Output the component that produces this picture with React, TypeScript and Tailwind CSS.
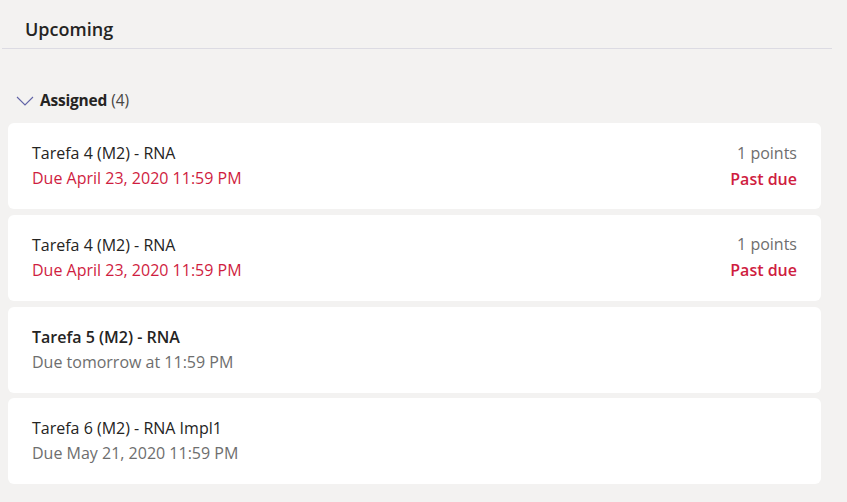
import React from 'react'

type Assignment = {
  title: string
  due: string
  points?: string
  pastDue?: boolean
  bold?: boolean
}

const items: Assignment[] = [
  { title: 'Tarefa 4 (M2) - RNA', due: 'Due April 23, 2020 11:59 PM', points: '1 points', pastDue: true },
  { title: 'Tarefa 4 (M2) - RNA', due: 'Due April 23, 2020 11:59 PM', points: '1 points', pastDue: true },
  { title: 'Tarefa 5 (M2) - RNA', due: 'Due tomorrow at 11:59 PM', bold: true },
  { title: 'Tarefa 6 (M2) - RNA Impl1', due: 'Due May 21, 2020 11:59 PM' },
]

export default function App() {
  return (
    <div className="min-h-[502px] w-[847px] bg-[#f3f2f1] font-['Open_Sans',sans-serif] text-[#252423]">
      <div className="ml-[2px] mr-[15px] border-b border-[#dcdbe3] pl-[23px] pt-[17px] pb-[7px]">
        <h1 className="text-[18px] font-semibold leading-[24px]">Upcoming</h1>
      </div>
      <div className="px-[8px] pr-[26px] pt-[40px]">
        <div className="mb-[11px] flex items-center pl-[8px]">
          <svg width="18" height="10" viewBox="0 0 18 10" className="mr-[6px]">
            <path d="M1 1 L9 9 L17 1" fill="none" stroke="#6264a7" strokeWidth="1.1" />
          </svg>
          <span className="text-[15.5px] font-bold tracking-[-0.2px]">Assigned</span>
          <span className="ml-[4px] text-[15.5px] text-[#484644]">(4)</span>
        </div>
        <div className="flex flex-col gap-[5.7px]">
          {items.map((a, i) => (
            <div key={i} className="flex h-[86px] items-center justify-between rounded-[6px] bg-white px-[24px]">
              <div className="flex flex-col">
                <span className={`text-[16px] leading-[25px] ${a.bold ? 'font-semibold' : ''}`}>{a.title}</span>
                <span className={`text-[16px] leading-[25px] ${a.pastDue ? 'text-[#cf1d3f]' : 'text-[#6e6e6e]'}`}>{a.due}</span>
              </div>
              {a.points && (
                <div className="flex flex-col items-end">
                  <span className="text-[16px] leading-[25px] text-[#6e6e6e]">{a.points}</span>
                  <span className="text-[16px] font-semibold leading-[26px] text-[#cf1d3f]">Past due</span>
                </div>
              )}
            </div>
          ))}
        </div>
      </div>
    </div>
  )
}
